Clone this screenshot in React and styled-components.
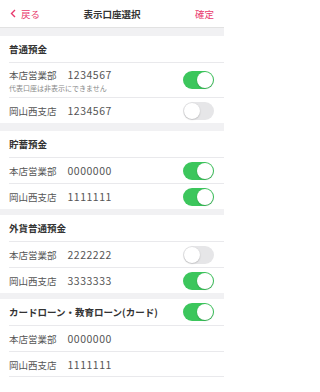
import React from 'react'
import styled, { createGlobalStyle } from 'styled-components'

const pink = "#e8396d";
const green = "#3cc65c";
const line = "#e9e9ec";

const GlobalStyle = createGlobalStyle`
	body {
		margin: 0;
		background: #fff;
		font-family: "Noto Sans CJK JP", "Noto Sans", sans-serif;
		-webkit-font-smoothing: antialiased;
	}
`

const Page = styled.div`
	width: 224px;
	background: #fff;
`

const Header = styled.div`
	height: 27px;
	border-bottom: 1px solid #e2e2e2;
	display: grid;
	grid-template-columns: 1fr auto 1fr;
	align-items: center;
	padding: 0 10px 0 10px;
`

const Back = styled.div`
	display: flex;
	align-items: center;
	gap: 5px;
	color: ${pink};
	font-size: 9.5px;
`

const Title = styled.div`
	font-size: 9.5px;
	font-weight: bold;
	color: #333;
`

const Done = styled.div`
	justify-self: end;
	color: ${pink};
	font-size: 9.5px;
`

const Band = styled.div`
	height: ${p => p.h}px;
	background: #f1f1f3;
`

const Section = styled.div`
	&:last-child > div:last-child {
		border-bottom: 1px solid ${line};
	}
`

const Row = styled.div`
	display: flex;
	align-items: center;
	justify-content: space-between;
	margin-left: 9px;
	padding-right: 10px;
	height: ${p => p.tall ? "35px" : "26px"};
	box-sizing: border-box;
	border-top: ${p => p.first ? "none" : `1px solid ${line}`};
`

const SectionTitle = styled.div`
	font-size: 9.5px;
	font-weight: bold;
	color: #333;
`

const Info = styled.div`
	display: flex;
	flex-direction: column;
`

const Name = styled.div`
	font-size: 9.5px;
	color: #555;
	display: flex;
	align-items: baseline;
`

const Number = styled.span`
	margin-left: 11px;
	font-size: 10.5px;
	letter-spacing: 0.5px;
`

const Note = styled.div`
	font-size: 7px;
	color: #888;
	margin-top: 1px;
`

const Track = styled.div`
	width: 31px;
	height: 18px;
	border-radius: 9px;
	box-sizing: border-box;
	background: ${p => p.on ? green : "#e6e6e8"};
	position: relative;
	flex-shrink: 0;
`

const Knob = styled.div`
	position: absolute;
	top: 1px;
	left: ${p => p.on ? "14px" : "1px"};
	width: 16px;
	height: 16px;
	border-radius: 50%;
	background: #fff;
	box-shadow: 0 0.5px 1.5px rgba(0, 0, 0, 0.25);
`

function Toggle({ on }) {
	return (
		<Track on={on}>
			<Knob on={on} />
		</Track>
	)
}

const sections = [
	{
		title: "普通預金",
		band: 8,
		rows: [
			{ name: "本店営業部", num: "1234567", on: true, note: "代表口座は非表示にできません" },
			{ name: "岡山西支店", num: "1234567", on: false },
		],
	},
	{
		title: "貯蓄預金",
		band: 8,
		rows: [
			{ name: "本店営業部", num: "0000000", on: true },
			{ name: "岡山西支店", num: "1111111", on: true },
		],
	},
	{
		title: "外貨普通預金",
		band: 6,
		rows: [
			{ name: "本店営業部", num: "2222222", on: false },
			{ name: "岡山西支店", num: "3333333", on: true },
		],
	},
	{
		title: "カードローン・教育ローン(カード)",
		band: 6,
		toggle: true,
		rows: [
			{ name: "本店営業部", num: "0000000" },
			{ name: "岡山西支店", num: "1111111" },
		],
	},
]

export default function App() {
	return (
		<Page>
			<GlobalStyle />
			<Header>
				<Back>
					<svg width="6" height="9" viewBox="0 0 6 9">
						<path d="M5 1 L1.5 4.5 L5 8" fill="none" stroke={pink} strokeWidth="1.4" />
					</svg>
					戻る
				</Back>
				<Title>表示口座選択</Title>
				<Done>確定</Done>
			</Header>
			{sections.map((s, i) => (
				<Section key={i}>
					<Band h={s.band} />
					<Row first>
						<SectionTitle>{s.title}</SectionTitle>
						{s.toggle && <Toggle on />}
					</Row>
					{s.rows.map((r, j) => (
						<Row key={j} tall={!!r.note}>
							<Info>
								<Name>{r.name}<Number>{r.num}</Number></Name>
								{r.note && <Note>{r.note}</Note>}
							</Info>
							{r.on !== undefined && <Toggle on={r.on} />}
						</Row>
					))}
				</Section>
			))}
		</Page>
	)
}
